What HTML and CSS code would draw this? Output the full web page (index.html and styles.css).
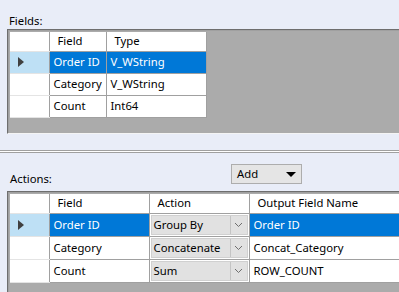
FILE: index.html
```html
<!DOCTYPE html>
<html>
<head>
<meta charset="utf-8">
<link rel="stylesheet" href="styles.css">
</head>
<body>
<div class="frame">
  <div class="label fields-label">Fields:</div>
  <div class="gridbox top-box">
    <table class="grid">
      <colgroup><col class="c-rh"><col class="c-f1"><col class="c-type"></colgroup>
      <tr class="head"><th class="rh"></th><th>Field</th><th>Type</th></tr>
      <tr><td class="rh sel-rh"><span class="arrow"></span></td><td class="hl">Order ID</td><td class="hl">V_WString</td></tr>
      <tr><td class="rh"></td><td>Category</td><td>V_WString</td></tr>
      <tr><td class="rh"></td><td>Count</td><td>Int64</td></tr>
    </table>
  </div>
  <div class="splitter"></div>
  <div class="actions-bar">
    <div class="label actions-label">Actions:</div>
    <div class="add-btn"><span>Add</span><span class="tri"></span></div>
  </div>
  <div class="gridbox bottom-box">
    <table class="grid">
      <colgroup><col class="c-rh"><col class="c-f2"><col class="c-act"><col class="c-out"></colgroup>
      <tr class="head"><th class="rh"></th><th>Field</th><th>Action</th><th>Output Field Name</th></tr>
      <tr><td class="rh sel-rh"><span class="arrow"></span></td><td class="hl">Order ID</td><td class="combo-cell"><div class="combo"><span class="combo-text">Group By</span><span class="combo-btn"><svg width="9" height="6" viewBox="0 0 9 6"><path d="M1 1 L4.5 4.5 L8 1" fill="none" stroke="#6e6e6e" stroke-width="1"/></svg></span></div></td><td class="hl">Order ID</td></tr>
      <tr><td class="rh"></td><td>Category</td><td class="combo-cell"><div class="combo"><span class="combo-text">Concatenate</span><span class="combo-btn"><svg width="9" height="6" viewBox="0 0 9 6"><path d="M1 1 L4.5 4.5 L8 1" fill="none" stroke="#6e6e6e" stroke-width="1"/></svg></span></div></td><td>Concat_Category</td></tr>
      <tr><td class="rh"></td><td>Count</td><td class="combo-cell"><div class="combo"><span class="combo-text">Sum</span><span class="combo-btn"><svg width="9" height="6" viewBox="0 0 9 6"><path d="M1 1 L4.5 4.5 L8 1" fill="none" stroke="#6e6e6e" stroke-width="1"/></svg></span></div></td><td>ROW_COUNT</td></tr>
    </table>
  </div>
</div>
</body>
</html>
```

FILE: styles.css
```css
html, body {
  margin: 0;
  padding: 0;
  background: #e9edf8;
  overflow: hidden;
}
.frame {
  width: 399px;
  height: 292px;
  overflow: hidden;
  font-family: "Noto Sans", "Open Sans", sans-serif;
  font-size: 11.3px;
  color: #000;
}
.label {
  line-height: 16px;
  height: 16px;
}
.fields-label {
  padding: 13px 0 0 9px;
}
.gridbox {
  margin-left: 7px;
  margin-right: -20px;
  background: #ababab;
  border-top: 1px solid #6e6e6e;
  border-left: 1px solid #6e6e6e;
  border-bottom: 1px solid #f4f4f4;
  box-shadow: inset 1px 1px 0 #a0a0a0;
  padding: 2px 0 0 2px;
  box-sizing: border-box;
}
.top-box {
  height: 105px;
}
.bottom-box {
  height: 120px;
}
.splitter {
  margin-top: 16px;
  height: 1px;
  border-top: 1px solid #a0a0a0;
  border-bottom: 1px solid #a0a0a0;
  background: #ffffff;
}
.actions-bar {
  display: flex;
  align-items: flex-start;
  height: 38px;
}
.actions-label {
  padding: 18px 0 0 10px;
  width: 60px;
}
.add-btn {
  margin: 11px 0 0 161px;
  width: 71px;
  height: 20px;
  box-sizing: border-box;
  border: 1px solid #adadad;
  background: #e5e5e5;
  display: flex;
  align-items: center;
  justify-content: space-between;
  padding: 0 5px 0 5px;
  line-height: 16px;
}
.tri {
  width: 0;
  height: 0;
  border-left: 5px solid transparent;
  border-right: 5px solid transparent;
  border-top: 5px solid #000;
  margin-top: 1px;
}
.grid {
  border-collapse: collapse;
  table-layout: fixed;
}
.c-rh { width: 39px; }
.c-f1 { width: 57px; }
.c-type { width: 100px; }
.c-f2 { width: 100px; }
.c-act { width: 100px; }
.c-out { width: 160px; }
.grid th, .grid td {
  background: #ffffff;
  border: 1px solid #a0a0a0;
  padding: 0 0 0 4px;
  text-align: left;
  font-weight: normal;
  white-space: nowrap;
  overflow: hidden;
  box-sizing: border-box;
  line-height: 16px;
}
.grid tr:first-child th {
  border-top: none;
}
.grid th:first-child, .grid td:first-child {
  border-left: none;
}
.grid .head th {
  height: 19px;
  padding-left: 8px;
  vertical-align: middle;
}
.grid td {
  height: 22px;
  vertical-align: middle;
}
.grid .rh {
  border-top-color: #e4e4e4;
  border-bottom-color: #e4e4e4;
  padding: 0;
}
.grid .head .rh {
  padding: 0;
}
.sel-rh {
  background: #bee0f5 !important;
}
.arrow {
  display: block;
  width: 0;
  height: 0;
  margin-left: 8px;
  border-top: 5px solid transparent;
  border-bottom: 5px solid transparent;
  border-left: 6px solid #404040;
}
.grid td.hl {
  background: #0078d7;
  color: #ffffff;
}
.grid td.combo-cell {
  padding: 1px;
  background: #ffffff;
}
.combo {
  display: flex;
  height: 20px;
  background: #e1e1e1;
  border: 1px solid #d0d0d0;
  box-sizing: border-box;
}
.combo-text {
  flex: 1;
  padding-left: 2px;
  line-height: 18px;
}
.combo-btn {
  width: 16px;
  border-left: 1px solid #c4c4c4;
  display: flex;
  align-items: center;
  justify-content: center;
}
```
